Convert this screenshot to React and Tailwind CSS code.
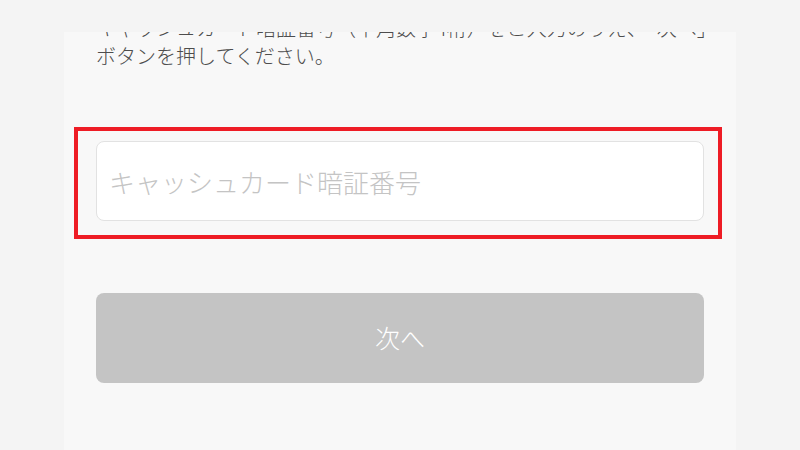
export default function App() {
  return (
    <div
      className="h-[450px] w-[800px] bg-[#f4f4f4] flex justify-center pt-[32px] font-light"
      style={{ fontFamily: '"Noto Sans CJK JP", "Noto Sans", sans-serif' }}
    >
      <div className="w-[672px] h-full bg-[#f8f8f8] overflow-hidden">
        <p className="-mt-[18px] px-[32px] text-[20px] leading-[28px] text-[#4d4d4d] whitespace-nowrap">
          キャッシュカード暗証番号（半角数字4桁）をご入力のうえ、「次へ」
          <br />
          ボタンを押してください。
        </p>

        <div className="mt-[57px] ml-[10px] w-[648px] border-[4px] border-[#ee1c25] pt-[10px] pb-[14px] px-[18px]">
          <input
            type="text"
            placeholder="キャッシュカード暗証番号"
            className="w-[608px] h-[80px] bg-white border border-[#e2e2e2] rounded-[8px] px-[12px] text-[26px] font-light text-[#333] placeholder:text-[#c4c4c4] outline-none"
          />
        </div>

        <div className="mt-[54px] px-[32px]">
          <button className="w-[608px] h-[90px] rounded-[8px] bg-[#c4c4c4] text-white text-[25px] font-light">
            次へ
          </button>
        </div>
      </div>
    </div>
  );
}
